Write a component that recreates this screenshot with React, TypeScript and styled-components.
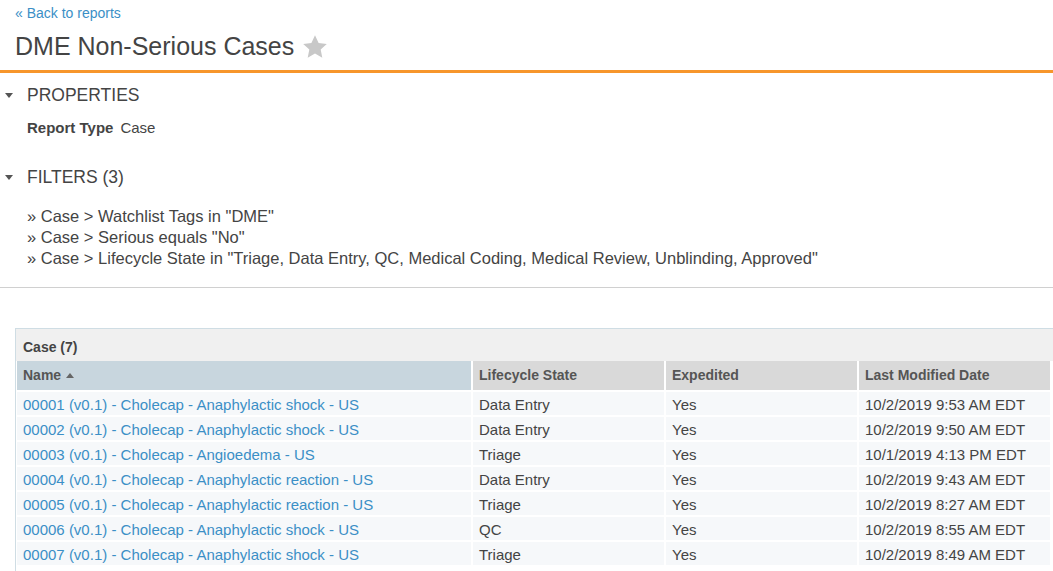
import styled, { createGlobalStyle } from "styled-components";

const GlobalStyle = createGlobalStyle`
  body {
    margin: 0;
    background: #fff;
    font-family: "Liberation Sans", Arial, sans-serif;
    color: #444;
    overflow: hidden;
  }
`;

const Header = styled.header`
  padding: 3px 15px 9px;
  border-bottom: 3px solid #f7962b;
`;

const BackLink = styled.a`
  display: block;
  font-size: 14px;
  line-height: 20px;
  color: #3b8fc6;
  text-decoration: none;
`;

const Title = styled.h1`
  display: flex;
  align-items: center;
  gap: 9px;
  margin: 8px 0 0;
  font-size: 25px;
  line-height: 30px;
  font-weight: 400;
  color: #444;
`;

const Section = styled.section<{ $top: number }>`
  margin-top: ${({ $top }) => $top}px;
`;

const SectionTitle = styled.h2`
  display: flex;
  align-items: center;
  margin: 0;
  padding-left: 5px;
  font-size: 17.5px;
  line-height: 24px;
  font-weight: 400;
  color: #444;
  text-transform: uppercase;
`;

const Caret = styled.span`
  width: 0;
  height: 0;
  margin-right: 14px;
  border-left: 4px solid transparent;
  border-right: 4px solid transparent;
  border-top: 5px solid #555;
`;

const Body = styled.div<{ $top: number }>`
  padding-left: 27px;
  margin-top: ${({ $top }) => $top}px;
`;

const Prop = styled.div`
  font-size: 15px;
  line-height: 20px;
  b {
    font-weight: 700;
    margin-right: 7px;
  }
`;

const FilterLine = styled.div`
  font-size: 16.5px;
  line-height: 21px;
  color: #444;
`;

const Divider = styled.hr`
  margin: 18px 0 0;
  border: 0;
  border-top: 1px solid #d0d0d0;
`;

const TableBox = styled.div`
  margin: 40px 0 0 15px;
  width: 1040px;
  border-top: 1px solid #cfdde4;
  border-left: 1px solid #cfdde4;
  padding-bottom: 8px;
`;

const Caption = styled.div`
  background: #f0f0f0;
  padding: 6px 0 2px 7px;
  line-height: 24px;
  font-size: 14px;
  font-weight: 700;
  color: #444;
`;

const Table = styled.table`
  margin-left: 1px;
  width: 1035px;
  border-collapse: separate;
  border-spacing: 0;
  table-layout: fixed;
`;

const Th = styled.th<{ $sorted?: boolean; $w: number }>`
  box-sizing: border-box;
  width: ${({ $w }) => $w}px;
  height: 31px;
  padding: 0 6px 1px;
  text-align: left;
  font-size: 14px;
  font-weight: 700;
  color: #555;
  background: ${({ $sorted }) => ($sorted ? "#c8d6de" : "#d9d9d9")};
  border-right: 2px solid #fff;
  border-bottom: 2px solid #fff;
`;

const SortArrow = styled.span`
  display: inline-block;
  margin-left: 5px;
  vertical-align: 2px;
  border-left: 4px solid transparent;
  border-right: 4px solid transparent;
  border-bottom: 5px solid #666;
`;

const Td = styled.td`
  box-sizing: border-box;
  height: 25px;
  padding: 1px 6px 0;
  font-size: 15px;
  color: #444;
  background: #f6f8fa;
  border-right: 2px solid #fff;
  border-bottom: 2px solid #fff;
  white-space: nowrap;
`;

const CaseLink = styled.a`
  color: #3b8fc6;
  text-decoration: none;
`;

const Star = () => (
  <svg width="24" height="23" viewBox="1 1 22 21">
    <path
      d="M12 1.3l3.3 6.9 7.5.9-5.6 5.1 1.5 7.5L12 18l-6.7 3.7 1.5-7.5-5.6-5.1 7.5-.9z"
      fill="#c8c8c8"
    />
  </svg>
);

const rows = [
  ["00001 (v0.1) - Cholecap - Anaphylactic shock - US", "Data Entry", "Yes", "10/2/2019 9:53 AM EDT"],
  ["00002 (v0.1) - Cholecap - Anaphylactic shock - US", "Data Entry", "Yes", "10/2/2019 9:50 AM EDT"],
  ["00003 (v0.1) - Cholecap - Angioedema - US", "Triage", "Yes", "10/1/2019 4:13 PM EDT"],
  ["00004 (v0.1) - Cholecap - Anaphylactic reaction - US", "Data Entry", "Yes", "10/2/2019 9:43 AM EDT"],
  ["00005 (v0.1) - Cholecap - Anaphylactic reaction - US", "Triage", "Yes", "10/2/2019 8:27 AM EDT"],
  ["00006 (v0.1) - Cholecap - Anaphylactic shock - US", "QC", "Yes", "10/2/2019 8:55 AM EDT"],
  ["00007 (v0.1) - Cholecap - Anaphylactic shock - US", "Triage", "Yes", "10/2/2019 8:49 AM EDT"],
];

const filters = [
  '» Case > Watchlist Tags in "DME"',
  '» Case > Serious equals "No"',
  '» Case > Lifecycle State in "Triage, Data Entry, QC, Medical Coding, Medical Review, Unblinding, Approved"',
];

export default function App() {
  return (
    <>
      <GlobalStyle />
      <Header>
        <BackLink href="#">« Back to reports</BackLink>
        <Title>
          DME Non-Serious Cases
          <Star />
        </Title>
      </Header>

      <Section $top={10}>
        <SectionTitle>
          <Caret />
          Properties
        </SectionTitle>
        <Body $top={11}>
          <Prop>
            <b>Report Type</b>Case
          </Prop>
        </Body>
      </Section>

      <Section $top={27}>
        <SectionTitle>
          <Caret />
          Filters (3)
        </SectionTitle>
        <Body $top={17}>
          {filters.map((f, i) => (
            <FilterLine key={i}>{f}</FilterLine>
          ))}
        </Body>
      </Section>

      <Divider />

      <TableBox>
        <Caption>Case (7)</Caption>
        <Table>
          <thead>
            <tr>
              <Th $w={456} $sorted>
                Name
                <SortArrow />
              </Th>
              <Th $w={193}>Lifecycle State</Th>
              <Th $w={193}>Expedited</Th>
              <Th $w={193}>Last Modified Date</Th>
            </tr>
          </thead>
          <tbody>
            {rows.map((r) => (
              <tr key={r[0]}>
                <Td>
                  <CaseLink href="#">{r[0]}</CaseLink>
                </Td>
                <Td>{r[1]}</Td>
                <Td>{r[2]}</Td>
                <Td>{r[3]}</Td>
              </tr>
            ))}
          </tbody>
        </Table>
      </TableBox>
    </>
  );
}
